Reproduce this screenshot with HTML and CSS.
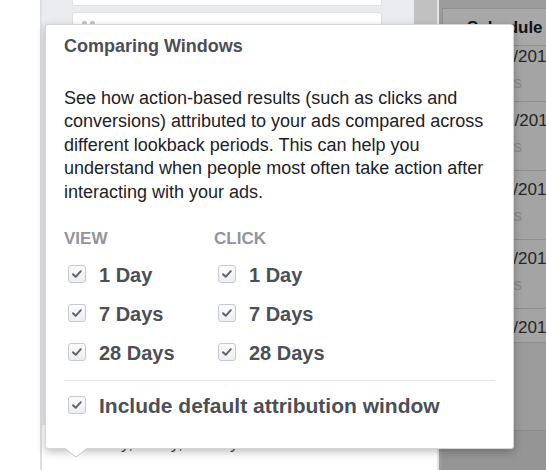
FILE: index.html
```html
<!DOCTYPE html>
<html lang="en">
<head>
    <meta charset="UTF-8">
    <title>Comparing Windows</title>
    <link rel="stylesheet" href="styles.css">
</head>
<body>
    <div class="page">
        <div class="gutter"></div>

        <div class="panel">
            <div class="panel-top">
                <div class="list">
                    <div class="card card-first"></div>
                    <div class="card card-second">
                        <svg class="handle" width="14" height="10" viewBox="0 0 14 10">
                            <rect x="0" y="0" width="5" height="5" rx="2" fill="#c4c7cc"/>
                            <rect x="8" y="0" width="5" height="5" rx="2" fill="#c4c7cc"/>
                            <rect x="0" y="7" width="5" height="5" rx="2" fill="#c4c7cc"/>
                            <rect x="8" y="7" width="5" height="5" rx="2" fill="#c4c7cc"/>
                        </svg>
                    </div>
                </div>
                <div class="scrollbar"></div>
            </div>
            <div class="panel-bottom">
                <p class="summary">1 day, 7 day, 28 day click</p>
            </div>
        </div>

        <div class="backdrop">
            <div class="table">
                <div class="table-head">Schedule</div>
                <div class="table-body">
                    <div class="row row-first">
                        <div class="row-date">12/11/2017</div>
                        <div class="row-sub">7 days</div>
                    </div>
                    <div class="row">
                        <div class="row-date">12/04/2017</div>
                        <div class="row-sub">7 days</div>
                    </div>
                    <div class="row">
                        <div class="row-date">11/27/2017</div>
                        <div class="row-sub">7 days</div>
                    </div>
                    <div class="row">
                        <div class="row-date">11/20/2017</div>
                        <div class="row-sub">7 days</div>
                    </div>
                    <div class="row">
                        <div class="row-date">11/13/2017</div>
                        <div class="row-sub">7 days</div>
                    </div>
                </div>
            </div>
            <div class="table-foot"></div>
        </div>
    </div>

    <div class="popover">
        <h2 class="popover-title">Comparing Windows</h2>
        <p class="popover-text">See how action-based results (such as clicks and conversions) attributed to your ads compared across different lookback periods. This can help you understand when people most often take action after interacting with your ads.</p>

        <div class="windows">
            <div class="window-col">
                <div class="col-label">VIEW</div>
                <div class="option"><span class="check"><svg width="18" height="18" viewBox="0 0 18 18"><path d="M5 9.2 L7.7 11.8 L12.8 6.2" /></svg></span>1 Day</div>
                <div class="option"><span class="check"><svg width="18" height="18" viewBox="0 0 18 18"><path d="M5 9.2 L7.7 11.8 L12.8 6.2" /></svg></span>7 Days</div>
                <div class="option"><span class="check"><svg width="18" height="18" viewBox="0 0 18 18"><path d="M5 9.2 L7.7 11.8 L12.8 6.2" /></svg></span>28 Days</div>
            </div>
            <div class="window-col">
                <div class="col-label">CLICK</div>
                <div class="option"><span class="check"><svg width="18" height="18" viewBox="0 0 18 18"><path d="M5 9.2 L7.7 11.8 L12.8 6.2" /></svg></span>1 Day</div>
                <div class="option"><span class="check"><svg width="18" height="18" viewBox="0 0 18 18"><path d="M5 9.2 L7.7 11.8 L12.8 6.2" /></svg></span>7 Days</div>
                <div class="option"><span class="check"><svg width="18" height="18" viewBox="0 0 18 18"><path d="M5 9.2 L7.7 11.8 L12.8 6.2" /></svg></span>28 Days</div>
            </div>
        </div>

        <div class="divider"></div>

        <div class="option option-default"><span class="check"><svg width="18" height="18" viewBox="0 0 18 18"><path d="M5 9.2 L7.7 11.8 L12.8 6.2" /></svg></span>Include default attribution window</div>

        <svg class="popover-arrow" width="22" height="10" viewBox="0 0 22 10">
            <polygon points="0,0 22,0 11,9" fill="#fff"/>
            <polyline points="0,0.5 11,9 22,0.5" fill="none" stroke="#c9cbcf" stroke-width="1"/>
        </svg>
    </div>
</body>
</html>
```

FILE: styles.css
```css
* {
    box-sizing: border-box;
}

body {
    margin: 0;
    width: 546px;
    height: 470px;
    overflow: hidden;
    position: relative;
    background-color: #fff;
    font-family: "Liberation Sans", Arial, sans-serif;
}

.page {
    display: flex;
    height: 470px;
}

.gutter {
    width: 42px;
    flex: none;
    background-color: #fff;
    border-right: 2px solid #dcdee1;
}

/* left side panel with the card list */
.panel {
    width: 395px;
    flex: none;
    display: flex;
    flex-direction: column;
}

.panel-top {
    height: 425px;
    display: flex;
    overflow: hidden;
}

.list {
    flex: 1;
    background-color: #e9ebee;
    padding-left: 30px;
}

.card {
    width: 310px;
    background-color: #fff;
    border: 1px solid #dddfe2;
    border-radius: 3px;
}

.card-first {
    height: 16px;
    margin-top: -10px;
}

.card-second {
    height: 420px;
    margin-top: 6px;
    padding: 8px 0 0 9px;
}

.handle {
    display: block;
}

.scrollbar {
    width: 23px;
    background-color: #c1c1c1;
}

.panel-bottom {
    flex: 1;
    background-color: #fff;
    padding: 9px 0 0 46px;
}

.summary {
    margin: 0;
    font-size: 17px;
    line-height: 20px;
    color: #4b4f56;
}

/* dimmed area on the right */
.backdrop {
    flex: 1;
    overflow: hidden;
    background-color: #9b9b9b;
    border-left: 2px solid #e4e4e4;
    padding: 8px 0 0 3px;
    display: flex;
    flex-direction: column;
}

.table {
    width: 220px;
    height: 335px;
    flex: none;
    background-color: #a4a4a4;
    border: 1px solid #8e8e8e;
    display: flex;
    flex-direction: column;
}

.table-head {
    height: 37px;
    flex: none;
    padding: 4px 0 0 24px;
    font-size: 17px;
    font-weight: bold;
    line-height: 29px;
    color: #141414;
    background-color: #a8a8a8;
    border-bottom: 1px solid #8f8f8f;
}

.table-body {
    flex: 1;
    overflow: hidden;
}

.row {
    height: 69px;
    padding: 9px 0 0 29px;
    border-bottom: 1px solid #8f8f8f;
    font-size: 17px;
    line-height: 20px;
    white-space: nowrap;
}

.row-first {
    height: 56px;
    padding-top: 1px;
}

.row-date {
    color: #262626;
}

.row-sub {
    margin-top: 6px;
    padding-left: 0;
    color: #8a8a8a;
}

.table-foot {
    margin-top: 87px;
    flex: 1;
    background-color: #959595;
    border-top: 1px solid #8a8a8a;
}

/* popover */
.popover {
    position: absolute;
    left: 45px;
    top: 24px;
    width: 469px;
    height: 425px;
    padding: 10px 18px 0 18px;
    background-color: #fff;
    border: 1px solid rgba(0, 0, 0, 0.16);
    border-radius: 3px;
    box-shadow: 0 3px 9px rgba(0, 0, 0, 0.25);
}

.popover-title {
    margin: 0;
    font-size: 18px;
    line-height: 22px;
    font-weight: bold;
    color: #4b4f56;
}

.popover-text {
    margin: 30px 0 0;
    font-size: 18px;
    line-height: 23.4px;
    color: #1d2129;
}

.windows {
    display: flex;
    margin-top: 25px;
}

.window-col {
    width: 150px;
}

.col-label {
    font-size: 17px;
    line-height: 20px;
    font-weight: bold;
    color: #90949c;
    margin-bottom: 14px;
}

.option {
    display: flex;
    align-items: center;
    font-size: 20px;
    line-height: 24px;
    font-weight: bold;
    color: #4b4f56;
    margin-bottom: 15px;
}

.option:last-child {
    margin-bottom: 0;
}

.check {
    width: 18px;
    height: 18px;
    flex: none;
    margin: -2px 13px 0 4px;
    border: 1px solid #c6c9ce;
    border-radius: 3px;
    background: linear-gradient(#fbfbfc, #eceef1);
    display: flex;
    align-items: center;
    justify-content: center;
}

.check svg {
    display: block;
    margin: -1px;
}

.check path {
    fill: none;
    stroke: #5f646b;
    stroke-width: 2;
    stroke-linecap: round;
    stroke-linejoin: round;
}

.divider {
    height: 1px;
    margin-top: 15px;
    background-color: #e5e6ea;
}

.option-default {
    margin-top: 13px;
    font-size: 21px;
}

.popover-arrow {
    position: absolute;
    left: 19px;
    bottom: -10px;
    display: block;
}
```
